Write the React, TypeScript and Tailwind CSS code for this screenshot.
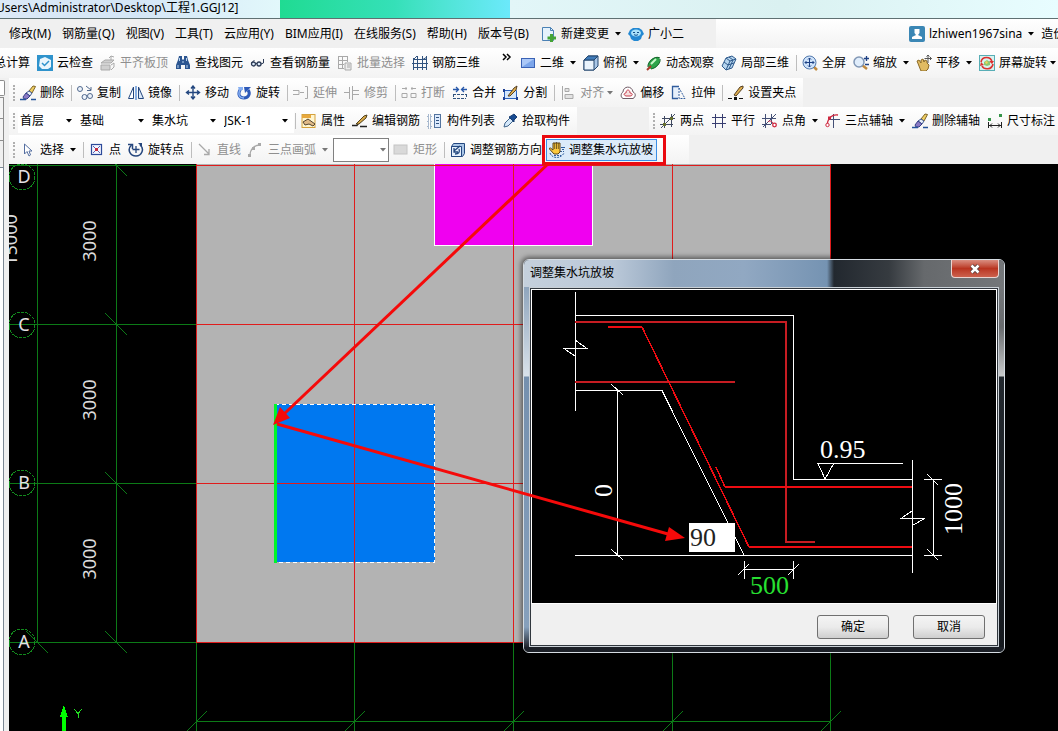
import type { ReactNode } from "react";

const NAVY = "#23477f";
const GREY = "#a9a9a9";

const icons: Record<string, ReactNode> = {
  cloudCheck: (
    <>
      <rect width="16" height="16" fill="#2f93cc" />
      <path d="M3 4l5-2 6 3v7l-3 2H5l-3-3z" fill="#eaf6fd" />
      <path d="M5 8l2.500 2.500L12 6" fill="none" stroke="#2f93cc" strokeWidth="1.500" />
    </>
  ),
  flatTop: (
    <>
      <path d="M1 8l4-3h9l-3 3zM1 10h9v5H1z" fill="#d0d0d0" stroke={GREY} />
      <path d="M11 1v4M9 3l2-2 3 1M11 10l3-2v4l-3 3" fill="none" stroke={GREY} />
    </>
  ),
  binoculars: (
    <>
      <path d="M4 1h3v3l1 1 1-1V1h3l1 4 2 5v4h-5v-4H6v4H1v-4l2-5z" fill="#2c5590" />
      <path d="M4.500 3v3M3 10v3M11.500 3v3M12 10v3M7 7h2" stroke="#b8d4f0" />
    </>
  ),
  glasses: (
    <>
      <circle cx="3.500" cy="9" r="2" fill="#dbe9f8" stroke="#2c3a55" strokeWidth="1.300" />
      <circle cx="9" cy="9" r="2" fill="#dbe9f8" stroke="#2c3a55" strokeWidth="1.300" />
      <path d="M5.500 8.500h1.500M1.500 8l3-3M11 9l2.500-1V4" fill="none" stroke="#2c3a55" />
    </>
  ),
  batch: (
    <>
      <path d="M1 1.500h10M1 5.500h10M1 9.500h6M1 13.500h6M1.500 1v13M5.500 1v13M10.500 1v6" fill="none" stroke={GREY} />
      <path d="M8 8h6v7H8zM10 10h3M10 12h3" fill="#eee" stroke={GREY} />
    </>
  ),
  rebar3d: (
    <path d="M2 4.500h13M0 8.500h16M1 12.500h14M1.500 3v12M5.500 1v14M10.500 1v14M14.500 1v14M1 5l4-4M10 5l5-3" fill="none" stroke="#31537f" />
  ),
  plane: (
    <>
      <rect x="1.500" y="3.500" width="13" height="9" fill="#7ba5ea" stroke="#3a62b5" />
      <path d="M2 4h12L2 12z" fill="#abc8f7" />
    </>
  ),
  cube: (
    <>
      <path d="M1 5l4-4h10v10l-4 4H1z" fill="#a9c6e6" stroke="#24476f" />
      <path d="M1 5h10v10H1z" fill="#eaf3fc" stroke="#24476f" />
      <path d="M1 5l4-4h10l-4 4z" fill="#3f7ab8" stroke="#24476f" />
    </>
  ),
  orbit: (
    <>
      <ellipse cx="8" cy="8" rx="7" ry="4.500" fill="#2da44a" transform="rotate(-45 8 8)" />
      <path d="M2 12C1 7 9 0 14 3M5 14C10 13 15 8 14 4" fill="none" stroke="#14632b" />
      <path d="M5 9l5-5" stroke="#c9f7ca" strokeWidth="2" />
      <path d="M1 15l4-4" stroke="#aa3b2c" strokeWidth="2" />
    </>
  ),
  local3d: (
    <>
      <path d="M5 3l6-2 4 3-4 9-6 2-4-4z" fill="#b7d5ee" stroke="#2e5a8c" />
      <path d="M5 3l4 3 6-2M9 6l-4 9M3 7l4 3 6-2M8 2l4 3-4 9" fill="none" stroke="#2e5a8c" />
    </>
  ),
  fullscreen: (
    <>
      <path d="M11 11l4 4" stroke="#c08a3e" strokeWidth="2.500" />
      <circle cx="7.500" cy="7.500" r="6.500" fill="#cfe3fa" stroke="#5379ad" />
      <path d="M7.500 3v9M3 7.500h9M6 4.500L7.500 3 9 4.500M6 10.500L7.500 12 9 10.500M4.500 6L3 7.500 4.500 9M10.500 6L12 7.500 10.500 9" fill="none" stroke="#1d4185" />
    </>
  ),
  zoom: (
    <>
      <path d="M9 10l5 4" stroke="#c08a3e" strokeWidth="2.500" />
      <circle cx="6" cy="7" r="5" fill="#e0edfb" stroke="#8197b5" strokeWidth="1.500" />
      <path d="M11 3.500h5M13.500 1v5M12 9.500h4" stroke="#1d4185" strokeWidth="1.300" />
    </>
  ),
  pan: (
    <>
      <path d="M1 6l2-1 2 3V5l2-1 1 3 1-2 2 1v2l2 2-1 4-2 2H5z" fill="#e1bb62" stroke="#8b6a27" />
      <path d="M12 0v8M8.500 3.500h7M10.500 1.500L12 0l1.500 1.500M14 2l1.500 1.500L14 5" fill="none" stroke="#555" />
    </>
  ),
  screenRotate: (
    <>
      <rect x=".500" y=".500" width="15" height="15" fill="#d9f2ef" stroke="#58aeb6" />
      <path d="M2 7c1-6 10-6 11 0M14 9c-1 6-9 6-11 2" fill="none" stroke="#dc3030" strokeWidth="1.600" />
      <path d="M10 6l5 0-2 3zM1 11l4-1-3-3z" fill="#dc3030" />
      <path d="M5 7l3-2 3 2v3l-3 1-3-1z" fill="#8bc96f" />
      <path d="M6 7l2-1 1 2-2 1z" fill="#f3d25c" />
    </>
  ),
  brush: (
    <>
      <path d="M9 6l4-5 2.500 .500L12 8z" fill="#f0cf63" stroke="#7d6325" />
      <path d="M6 8l3-2 3 2-2 3z" fill="#e7eef8" stroke="#415a8f" />
      <path d="M3 12l3-4 4 3-3 3H4z" fill="#8a79c4" stroke="#343f86" />
      <path d="M0 14.500h6M11 14.500h5" stroke="#25549b" strokeWidth="1.600" />
    </>
  ),
  copy: (
    <>
      <circle cx="3" cy="4" r="2.500" fill="#edf3fb" stroke="#50688d" />
      <circle cx="7.500" cy="12" r="2.500" fill="#edf3fb" stroke="#50688d" />
      <circle cx="13" cy="11" r="2.500" fill="#edf3fb" stroke="#50688d" />
      <path d="M9 1l5 4M14 2v3.500h-4" fill="none" stroke="#50688d" />
    </>
  ),
  mirror: (
    <>
      <path d="M5.500 2v11.500h-5z" fill="#fff" stroke={NAVY} />
      <path d="M10.500 2v11.500h5z" fill="#dce9f8" stroke={NAVY} />
      <path d="M8 1v14" stroke="#4d86d3" strokeWidth="1.300" />
    </>
  ),
  move: (
    <path d="M8 1v13M1.500 7.500h13M6 3.500L8 1l2 2.500M6 11.500L8 14l2-2.500M4 5.500l-2.500 2L4 9.500M12 5.500l2.500 2L12 9.500" fill="none" stroke={NAVY} strokeWidth="1.400" />
  ),
  rotate: (
    <>
      <path d="M4.500 4C1 10 4 13 8 13s7-4 4-8" fill="none" stroke="#2d59b8" strokeWidth="3" />
      <path d="M4.500 4C1 10 4 13 8 13" fill="none" stroke="#86aff2" strokeWidth="1.500" />
      <path d="M8 2h7l-6 6z" fill="#2d59b8" />
      <path d="M2 2h5v3H3z" fill="#86aff2" />
    </>
  ),
  extend: (
    <path d="M0 5.500h6v4H0M7 7.500h4M12 1.500h2.500v12H12" fill="none" stroke={GREY} />
  ),
  trim: (
    <path d="M0 7.500h5M5.500 2v12M8.500 1v14M9 5.500h6M9 9.500h6" fill="none" stroke={GREY} />
  ),
  split: (
    <path d="M1 3.500h5M5 2v3M10 3.500h5M11 2v3M1 8.500h5v4H1zM10 8.500h5v4h-5z" fill="none" stroke={GREY} />
  ),
  merge: (
    <>
      <path d="M1 4.500h5M4 2l2.500 2.500L4 7M15 4.500h-5M12 2L9.500 4.500 12 7" fill="none" stroke="#2657aa" strokeWidth="1.300" />
      <path d="M1 9.500h13M1 13.500h13M1.500 9v4M14.500 9v4" fill="none" stroke="#31537f" strokeDasharray="3 1" />
    </>
  ),
  divide: (
    <>
      <path d="M1.500 5.500h12v8h-12z" fill="#d6e7fb" stroke="#2b62bd" />
      <path d="M0 4h2v3H0zM0 12h2v3H0zM13 12h2v3h-2z" fill="#1f3f93" />
      <path d="M5 11l6-8 3-2-1 4-6 6z" fill="#e0af4f" stroke="#543f23" />
    </>
  ),
  align: (
    <path d="M2.500 1v14M5 3.500h4v3H5zM5 9.500h8v4H5z" fill="#e2e2e2" stroke={GREY} />
  ),
  offset: (
    <>
      <path d="M5 13.500H3C0 12 1 8 3 7c0-6 9-7 10 0 3 1 3 5 0 6.500z" fill="#fff" stroke="#705b66" />
      <path d="M6 11c-3-1-2-3 0-3 0-4 4-4 4 0 3 0 3 3 0 3z" fill="#f6dede" stroke="#c73d4d" />
    </>
  ),
  stretch: (
    <>
      <path d="M8 1.500H1.500v12H7" fill="#e7f0fb" stroke="#315d9d" strokeWidth="1.300" />
      <path d="M8 3v10.500h6L8 3" fill="none" stroke="#315d9d" strokeDasharray="2 1" />
    </>
  ),
  grip: (
    <>
      <path d="M0 13.500h4M11 13.500h4" stroke="#111" />
      <path d="M6 12h3v3H6z" fill="#111" />
      <path d="M6 10l6-8 3-1v2L8 11z" fill="#e0af4f" stroke="#543f23" />
    </>
  ),
  props: (
    <>
      <rect x="1" y="1.500" width="13" height="13" fill="#fff5cf" stroke="#d4a13c" />
      <path d="M1 2h9v3H1z" fill="#e8a83c" />
      <path d="M2 9l5-3 7 5-2 2-4-2-4 1z" fill="#dfb987" stroke="#55452f" />
    </>
  ),
  editRebar: (
    <>
      <path d="M0 12.500h5l2-3M8 13.500h7" fill="none" stroke="#222" strokeWidth="1.300" />
      <path d="M4 11l8-8 3-1-1 3-7 6z" fill="#d9a947" stroke="#50411f" />
    </>
  ),
  list: (
    <>
      <path d="M1 2h3v3H1zM1 7h3v3H1zM1 12h3v3H1z" fill="#fff" stroke="#53749f" strokeDasharray="1 1" />
      <rect x="7.500" y="1.500" width="6" height="13" fill="#dceafd" stroke="#53749f" />
      <path d="M9 4.500h3M9 7.500h3M9 10.500h3" stroke="#31537f" />
    </>
  ),
  picker: (
    <>
      <path d="M2 14l1-4 5-5 3 3-5 5z" fill="#d5e8fa" stroke="#41668d" />
      <path d="M7 4l2-1 3-2 3 3-3 3v2z" fill="#184b91" stroke="#173c72" />
    </>
  ),
  twoPoint: (
    <>
      <path d="M0 11.500h13M2 5.500h13M4.500 3v12M11.500 1v13" fill="none" stroke="#404a62" />
      <path d="M1 15L15 1" stroke="#404a62" />
      <path d="M3 10h3v3H3zM10 4h3v3h-3z" fill="#666f30" />
    </>
  ),
  parallel: (
    <path d="M1 4.500h14M1 10.500h14M4.500 1v14M11.500 1v14" fill="none" stroke="#373d70" />
  ),
  pointAngle: (
    <>
      <path d="M0 5.500h14M0 11.500h9M3.500 1v14M9.500 1v10M1 14L14 1" fill="none" stroke="#445076" />
      <path d="M6 9c1-2 5-1 5 2" fill="none" stroke="#cf283f" />
      <circle cx="12.500" cy="12" r="1.800" fill="#fff" stroke="#cf283f" strokeWidth="1.300" />
    </>
  ),
  threeAxis: (
    <>
      <path d="M4 6.500h11M8.500 1v14" fill="none" stroke="#445076" />
      <path d="M13 2C7 1 3 5 2 12" fill="none" stroke="#cf283f" strokeWidth="1.300" />
      <circle cx="2.500" cy="12" r="1.700" fill="#fff" stroke="#cf283f" />
      <path d="M3 3.500h3v3H3z" fill="#cf283f" />
    </>
  ),
  dimension: (
    <>
      <path d="M1 5h3v3H1zM12 1h3v3h-3z" fill="#37954a" />
      <path d="M1.500 9v6M14.500 9v6M2 12.500h12M5 10.500l-2 2 2 2M11 10.500l2 2-2 2" fill="none" stroke="#222" />
    </>
  ),
  pointer: (
    <path d="M4.500 2v10l2.500-2.500 2 4.500 1.500-1-1.500-4h3z" fill="#fff" stroke="#546ea0" />
  ),
  point: (
    <>
      <rect x="2.500" y="2.500" width="10" height="10" fill="#f3f6ff" stroke="#2d4a9a" strokeWidth="1.200" />
      <path d="M4 4l7 7M11 4l-7 7" stroke="#5a63b5" />
      <path d="M6 6h3v3H6z" fill="#c32d42" />
    </>
  ),
  rotatePoint: (
    <>
      <path d="M3.500 3c-5 5-1 11 4.500 11s9-7 4-11" fill="none" stroke="#24457c" strokeWidth="1.500" />
      <path d="M0 2.500h4.500V7" fill="none" stroke="#24457c" strokeWidth="1.500" />
      <path d="M8 4v7M4.500 7.500h7" stroke="#24457c" strokeWidth="1.300" />
      <path d="M10 1h4v4z" fill="#24457c" />
    </>
  ),
  line: (
    <path d="M2 2l10 10M12 7v5.500H7" fill="none" stroke={GREY} strokeWidth="1.300" />
  ),
  arc: (
    <>
      <path d="M2 14C2 7 6 3 12 3" fill="none" stroke={GREY} strokeWidth="1.300" />
      <path d="M0 12h3v3H0zM4 5h3v3H4zM10 1h3v3h-3z" fill={GREY} />
    </>
  ),
  rectangle: <rect x="1" y="3" width="13" height="9" fill="#d9d9d9" stroke="#c4c4c4" />,
  rebarDir: (
    <>
      <path d="M1.500 4.500l2-3h11v10l-2 3h-11z" fill="#a9c5e6" stroke={NAVY} />
      <path d="M1.500 4.500h10v10h-10z" fill="#e5f0fc" stroke={NAVY} />
      <path d="M5 12c4 0 5-2 4-5M4 6v4h4M4 9l6-5" fill="none" stroke={NAVY} strokeWidth="1.300" />
    </>
  ),
  pitSlope: (
    <>
      <path d="M1 11c2 6 11 6 14 0M5 13.500h7M11 9.500h4" fill="none" stroke="#2e5e9e" strokeDasharray="2 1" />
      <path d="M0 6.500l1.500-.500L4 8V1h7v9l-2 2H5z" fill="#fbc93d" stroke="#5c4317" />
      <path d="M5.700 1v6M7.500 0v7M9.300 1v6" stroke="#5c4317" strokeWidth=".800" />
      <path d="M12 5.500h4M13 7.500h2" stroke="#2e5e9e" />
    </>
  ),
  newChange: (
    <>
      <path d="M1.500 1.500h8l3 3v10h-11z" fill="#e5f2fc" stroke="#4b81b4" />
      <path d="M9.500 1.500v3h3" fill="none" stroke="#4b81b4" />
      <path d="M9 8h3v2.500h3v3h-3V16H9v-2.500H6.500v-3H9z" fill="#45a335" />
    </>
  ),
  robot: (
    <>
      <path d="M2 4l3-2h6l3 2 2 4-2 2-1 3-3 2H6l-3-2-1-3-2-2z" fill="#2388d2" />
      <ellipse cx="8" cy="7" rx="5" ry="3.500" fill="#a8e1fa" />
      <path d="M5 6.500h2M9 6.500h2M6 8.500c1 1 3 1 4 0" fill="none" stroke="#114d87" />
    </>
  ),
  user: (
    <>
      <rect width="16" height="16" rx="2" fill="#3b87b5" />
      <path d="M5.500 3h5v4l-1.500 2 4 2v2H3v-2l4-2-1.500-2z" fill="#fff" />
    </>
  ),
};

function Icon({ name }: { name: string }) {
  return (
    <svg className="size-4 shrink-0" viewBox="0 0 16 16" aria-hidden="true">
      {icons[name]}
    </svg>
  );
}

function Caret({ muted = false }: { muted?: boolean }) {
  return (
    <svg className="h-1 w-1.5 shrink-0" viewBox="0 0 6 4" aria-hidden="true">
      <path d="M0 0h6L3 3.500z" fill={muted ? "#777" : "#000"} />
    </svg>
  );
}

type ToolProps = { icon?: string; label: string; muted?: boolean; menu?: boolean; tight?: boolean };

function Tool({ icon, label, muted = false, menu = false, tight = false }: ToolProps) {
  return (
    <button
      type="button"
      disabled={muted}
      className={`mr-[7px] flex h-6 shrink-0 items-center whitespace-nowrap ${muted ? "text-[#8f8f8f]" : "text-black"}`}
    >
      {icon && <Icon name={icon} />}
      <span className={icon ? "ml-1" : ""}>{label}</span>
      {menu && (
        <span className={tight ? "ml-[3px]" : "ml-1.5"}>
          <Caret muted={muted} />
        </span>
      )}
    </button>
  );
}

function Sep() {
  return <span className="mr-[5px] h-4 w-px shrink-0 bg-[#bdbdbd]" />;
}

function Grip() {
  return <span className="mr-[5px] ml-1 h-4 w-0 shrink-0 border-l-2 border-dotted border-[#b0b0b0]" />;
}

function Combo({ label, value, className }: { label: string; value: string; className: string }) {
  return (
    <label className={`relative flex h-6 shrink-0 items-center ${className}`}>
      <span className="sr-only">{label}</span>
      <select className="h-6 w-full appearance-none bg-white pl-0.5 outline-none" defaultValue={value}>
        <option>{value}</option>
      </select>
      <span className="pointer-events-none absolute right-1.5">
        <Caret />
      </span>
    </label>
  );
}

const STRIP = "flex items-center bg-linear-to-b from-white to-[#f3f3f3]";

const menus = ["修改(M)", "钢筋量(Q)", "视图(V)", "工具(T)", "云应用(Y)", "BIM应用(I)", "在线服务(S)", "帮助(H)", "版本号(B)"];

function TitleBar() {
  return (
    <header className="flex h-[19px] items-center overflow-hidden border-b border-[#5f7072] bg-[#e6f9fb]">
      <h1 className="-ml-1 h-full w-[284px] shrink-0 bg-linear-to-r from-[#dce9f7] via-[#d4e6f6] to-[#e2f8fb] text-xs leading-4 whitespace-nowrap">
        Users\Administrator\Desktop\工程1.GGJ12]
      </h1>
      <div className="h-full w-[230px] shrink-0 bg-linear-to-r from-[#1fdb92] via-[#35e0b8] to-[#6be9fb]" />
      <div className="h-full flex-1 bg-linear-to-r from-[#e2f6f8] via-[#daf1f1] to-[#e8fdff]" />
    </header>
  );
}

function MenuBar() {
  return (
    <nav className="flex h-[29px] items-center overflow-hidden">
      <div className="flex h-full w-[716px] shrink-0 items-center pl-[9px]">
        <div className="mr-0.5 flex gap-[11px] pr-2.5">
          {menus.map((m) => (
            <button key={m} type="button" className="shrink-0 whitespace-nowrap">
              {m}
            </button>
          ))}
        </div>
        <Tool icon="newChange" label="新建变更" menu />
        <Tool icon="robot" label="广小二" />
      </div>
      <div className="flex h-full flex-1 items-center bg-linear-to-b from-white to-[#f3f3f3] pl-[193px]">
        <Tool icon="user" label="lzhiwen1967sina" menu />
        <Tool label="造价" />
      </div>
    </nav>
  );
}

function ViewBar() {
  return (
    <div className={`${STRIP} h-[30px] overflow-hidden`}>
      <div className="-ml-1.5 flex w-[522px] shrink-0 items-center">
        <Tool label="总计算" />
        <Tool icon="cloudCheck" label="云检查" />
        <Tool icon="flatTop" label="平齐板顶" muted />
        <Tool icon="binoculars" label="查找图元" />
        <Tool icon="glasses" label="查看钢筋量" />
        <Tool icon="batch" label="批量选择" muted />
        <Tool icon="rebar3d" label="钢筋三维" />
        <button type="button" aria-label="更多" className="mb-3 ml-auto pr-1">
          <svg className="h-2 w-2.5" viewBox="0 0 10 8" aria-hidden="true">
            <path d="M1 1l3 3-3 3M5 1l3 3-3 3" fill="none" stroke="#000" strokeWidth="1.500" />
          </svg>
        </button>
      </div>
      <div className="flex shrink-0 items-center pl-1">
        <Tool icon="plane" label="二维" menu />
        <Tool icon="cube" label="俯视" menu />
        <Tool icon="orbit" label="动态观察" />
        <Tool icon="local3d" label="局部三维" />
        <Sep />
        <Tool icon="fullscreen" label="全屏" />
        <Tool icon="zoom" label="缩放" menu />
        <Tool icon="pan" label="平移" menu />
        <Tool icon="screenRotate" label="屏幕旋转" menu tight />
      </div>
    </div>
  );
}

function EditBar() {
  return (
    <div className="flex h-[29px] overflow-hidden">
      <div className={`${STRIP} shrink-0`}>
        <Grip />
        <Tool icon="brush" label="删除" />
        <Sep />
        <Tool icon="copy" label="复制" />
        <Tool icon="mirror" label="镜像" />
        <Sep />
        <Tool icon="move" label="移动" />
        <Tool icon="rotate" label="旋转" />
        <Sep />
        <Tool icon="extend" label="延伸" muted />
        <Tool icon="trim" label="修剪" muted />
        <Sep />
        <Tool icon="split" label="打断" muted />
        <Tool icon="merge" label="合并" />
        <Tool icon="divide" label="分割" />
        <Sep />
        <Tool icon="align" label="对齐" muted menu tight />
        <Tool icon="offset" label="偏移" />
        <Tool icon="stretch" label="拉伸" />
        <Sep />
        <Tool icon="grip" label="设置夹点" />
      </div>
    </div>
  );
}

function ComponentBar() {
  return (
    <div className="flex h-7 overflow-hidden">
      <div className={`${STRIP} w-[568px] shrink-0`}>
        <Grip />
        <div className="-ml-0.5 flex">
          <Combo label="楼层" value="首层" className="w-[60px]" />
          <Combo label="构件类型" value="基础" className="w-[72px]" />
          <Combo label="构件" value="集水坑" className="w-[72px]" />
          <Combo label="名称" value="JSK-1" className="w-[72px]" />
        </div>
        <span className="w-1" />
        <Sep />
        <Tool icon="props" label="属性" />
        <Tool icon="editRebar" label="编辑钢筋" />
        <Tool icon="list" label="构件列表" />
        <Tool icon="picker" label="拾取构件" />
      </div>
      <div className={`${STRIP} ml-[72px] flex-1`}>
        <Grip />
        <Tool icon="twoPoint" label="两点" />
        <Tool icon="parallel" label="平行" />
        <Tool icon="pointAngle" label="点角" menu />
        <Tool icon="threeAxis" label="三点辅轴" menu />
        <Tool icon="brush" label="删除辅轴" />
        <Tool icon="dimension" label="尺寸标注" />
      </div>
    </div>
  );
}

function DrawBar() {
  return (
    <div className="flex h-[29px] overflow-hidden">
      <div className={`${STRIP} shrink-0`}>
        <Grip />
        <Tool icon="pointer" label="选择" menu />
        <Sep />
        <Tool icon="point" label="点" />
        <Tool icon="rotatePoint" label="旋转点" />
        <Sep />
        <Tool icon="line" label="直线" muted />
        <Tool icon="arc" label="三点画弧" muted menu />
        <label className="relative mr-1 -ml-0.5 flex w-14 items-center">
          <span className="sr-only">画弧参数</span>
          <select disabled className="h-6 w-full appearance-none border border-[#808080] bg-white" />
          <span className="pointer-events-none absolute right-[3px]">
            <Caret muted />
          </span>
        </label>
        <Tool icon="rectangle" label="矩形" muted />
        <Sep />
        <Tool icon="rebarDir" label="调整钢筋方向" />
        <button
          type="button"
          className="-ml-[3px] flex h-[22px] w-[111px] shrink-0 items-center border border-[#3a8ee6] bg-[#dcebfa] pl-0.5 whitespace-nowrap"
        >
          <Icon name="pitSlope" />
          <span className="ml-1">调整集水坑放坡</span>
        </button>
        <span className="w-8" />
      </div>
    </div>
  );
}

function SidePanel() {
  return (
    <aside className="flex w-[9px] shrink-0 flex-col pt-0.5">
      <div className="h-4 w-[5px] rounded-r-xs border border-l-0 border-[#8d8d8d] bg-white" />
      <div className="mt-px h-[22px] w-1 border-y border-r border-[#8d8d8d] bg-[#f4f4f4]" />
      <div className="h-[22px] w-1 border-r border-b border-[#8d8d8d] bg-[#f4f4f4]" />
      <div className="h-[26px] w-1 border-r border-[#8d8d8d]" />
      <div className="w-1 flex-1 border-t border-r border-[#7c8894] bg-white" />
    </aside>
  );
}

const gridX = [196, 354, 513, 672, 830];
const gridY = [165, 324, 483, 642];
const axes = [
  { name: "D", y: 177 },
  { name: "C", y: 325 },
  { name: "B", y: 483 },
  { name: "A", y: 642 },
];

function PlanDrawing() {
  return (
    <svg className="absolute inset-0 size-full" role="img" aria-label="基础平面图">
      <g transform="translate(-9 -164)" shapeRendering="crispEdges">
        <rect x="196" y="164" width="635" height="479" fill="#b3b3b3" />
        <rect x="434.500" y="163.500" width="158" height="82" fill="#f000f0" stroke="#fff" />
        <rect x="276" y="404" width="159" height="158" fill="#0078f0" />
        <g stroke="#0c7a17" fill="none">
          <path d="M37.500 164V642M116.500 164V642M196 721.500H830" />
          {gridY.map((y) => (
            <path key={y} d={`M9 ${y + 0.5}H196`} />
          ))}
          {gridX.map((x) => (
            <path key={x} d={`M${x + 0.5} 643V731M${x - 10} 732L${x + 11} 711`} />
          ))}
          {gridY.map((y) => (
            <path key={`tick${y}`} d={`M105 ${y - 11}L127 ${y + 11}`} />
          ))}
          <path d="M26 631L48 653" />
        </g>
        <g fill="#e01c1c">
          {gridY.map((y) => (
            <rect key={y} x="196" y={y} width="635" height="1" />
          ))}
          {gridX.map((x) => (
            <rect key={x} x={x} y="164" width="1" height="479" />
          ))}
        </g>
        <path d="M275 404.500H434.500V562.500H275" fill="none" stroke="#fff" strokeDasharray="4 3" />
        <path d="M275.500 404V563" stroke="#00f52a" strokeWidth="3" />
        {axes.map((a) => (
          <g key={a.name}>
            <circle cx="22" cy={a.y} r="13" fill="none" stroke="#128a1d" strokeDasharray="3 1" />
            <text x="24" y={a.y + 6} textAnchor="middle" fill="#e4e0e4" className="text-[18px]">
              {a.name}
            </text>
          </g>
        ))}
        <g fill="#dcdcdc" textAnchor="middle" className="text-[18px]">
          <text transform="translate(17 240) rotate(-90)">15000</text>
          <text transform="translate(96 241) rotate(-90)">3000</text>
          <text transform="translate(96 400) rotate(-90)">3000</text>
          <text transform="translate(96 559) rotate(-90)">3000</text>
        </g>
        <path d="M62 732V717H60L64 705L68 717H66V732z" fill="#00ff00" />
        <path d="M74 709L78 713.500L82 709M78 713V718" fill="none" stroke="#22dd22" />
      </g>
    </svg>
  );
}

function SectionDrawing() {
  return (
    <svg className="absolute inset-0 size-full" role="img" aria-label="集水坑剖面图">
      <g transform="translate(-532 -290)" fill="none" shapeRendering="crispEdges">
        <g stroke="#fff">
          <path d="M575.500 292V411M575 340L587 348.500H564L575 356" />
          <path d="M575 315.500H793.500V479.500H912" />
          <path d="M575 390.500H662L744 555M575 555.500H912" />
          <path d="M617.500 390V555M611 384L623 395M611 549L623 560" />
          <path d="M912.500 460V573M912 511L901 518.500H925L913 525" />
          <path d="M903 463.500H818L825 479L834 463" />
          <path d="M933.500 479V555M924 479.500H942M924 555.500H942M927 474L938 485M927 549L938 560" />
          <path d="M744 569.500H793M744.500 561V579M793.500 561V579M738 575L749 564M788 575L799 564" />
        </g>
        <path d="M575 322H786V542H815M575 382H735" stroke="#c61c22" strokeWidth="2" />
        <path d="M608 327H642M749 547H912M725 487H912" stroke="#ee0c12" strokeWidth="2" />
        <path d="M642 327L749 547M716 467L725 487" stroke="#ee0c12" strokeWidth="1.500" />
        <g fill="#fff" className="font-['Liberation_Serif',serif] text-[26px]">
          <text x="820" y="458">0.95</text>
          <text x="750" y="594" fill="#28e032">500</text>
          <text transform="translate(962 535) rotate(-90)">1000</text>
          <text transform="translate(612 497) rotate(-90)">0</text>
        </g>
      </g>
    </svg>
  );
}

const DIALOG_BUTTON =
  "h-6 w-[72px] rounded-[3px] border border-[#707070] bg-linear-to-b from-[#f4f4f4] via-[#ebebeb] to-[#cfcfcf] text-xs";

function SlopeDialog() {
  return (
    <section
      role="dialog"
      aria-label="调整集水坑放坡"
      className="absolute top-[95px] left-[514px] flex h-[394px] w-[482px] flex-col overflow-hidden rounded-md border border-[#d5dce2] bg-[#1c2027] shadow-[0_0_5px_2px_rgba(0,0,0,0.5)]"
    >
      <div className="flex h-[27px] shrink-0 items-start justify-between bg-[linear-gradient(90deg,#c5d0dc_0,#bac8d8_90px,#8fa5bd_150px,#91a8c2_220px,#7593b2_303px,#22282f_310px,#363b40_365px,#66696c_400px,#74777a_100%)] pr-[5px] pl-1.5">
        <h2 className="leading-[26px]">调整集水坑放坡</h2>
        <button
          type="button"
          aria-label="关闭"
          className="flex h-[18px] w-12 items-center justify-center rounded-b-[4px] border border-t-0 border-[#ead4d0] bg-linear-to-b from-[#d98d80] via-[#b93420] to-[#cc604c]"
        >
          <svg className="h-2.5 w-3" viewBox="0 0 12 10" aria-hidden="true">
            <path d="M2.500 1.500L9.500 8.500M9.500 1.500L2.500 8.500" stroke="#4b3a3a" strokeWidth="4" />
            <path d="M2.500 1.500L9.500 8.500M9.500 1.500L2.500 8.500" stroke="#fff" strokeWidth="2.500" />
          </svg>
        </button>
      </div>
      <div className="flex flex-1">
        <div className="w-[5px] bg-[linear-gradient(180deg,#8fa5bd_0,#d9e2ea_89px,#7590ae_90px,#86a0bc_340px,#22262e_100%)]" />
        <div className="flex flex-1 flex-col border border-[#c9d0d6] bg-[#30363d] p-px">
          <div className="relative flex-1 border border-white bg-black">
            <SectionDrawing />
            <input
              aria-label="放坡角度"
              defaultValue="90"
              className="absolute top-[233px] left-[157px] h-[29px] w-[46px] bg-white pl-px font-['Liberation_Serif',serif] text-[26px] leading-7 text-[#222] outline-none"
            />
          </div>
          <div className="flex h-[41px] items-center justify-end gap-6 bg-[#f0f0f0] pt-1 pr-3">
            <button type="button" className={DIALOG_BUTTON}>
              确定
            </button>
            <button type="button" className={DIALOG_BUTTON}>
              取消
            </button>
          </div>
        </div>
        <div className="w-[5px] bg-[linear-gradient(180deg,#74777a_0,#686b6e_40px,#c8cacb_89px,#22282e_90px,#15191e_100%)]" />
      </div>
      <div className="h-[5px] bg-[#1c2027]" />
    </section>
  );
}

function Annotations() {
  return (
    <svg className="pointer-events-none absolute inset-0 size-full" aria-hidden="true">
      <rect x="543.500" y="136.500" width="121" height="27" fill="none" stroke="#ea0a10" strokeWidth="3" />
      <g stroke="#f50a0a" strokeWidth="3">
        <path d="M549 163L284 414" />
        <path d="M277 424L668 534" />
      </g>
      <path d="M273 425L280 407L290 418zM685 538L665 541L669 527z" fill="#f50a0a" />
    </svg>
  );
}

export default function App() {
  return (
    <div className="relative flex min-h-screen flex-col overflow-hidden bg-[#f0f0f0] font-['Noto_Sans','Noto_Sans_CJK_SC',sans-serif] text-xs text-black">
      <TitleBar />
      <MenuBar />
      <ViewBar />
      <div className="flex flex-1">
        <SidePanel />
        <div className="flex min-w-0 flex-1 flex-col">
          <EditBar />
          <ComponentBar />
          <DrawBar />
          <main className="relative min-h-[500px] flex-1 overflow-hidden bg-black">
            <PlanDrawing />
            <SlopeDialog />
          </main>
        </div>
      </div>
      <Annotations />
    </div>
  );
}
